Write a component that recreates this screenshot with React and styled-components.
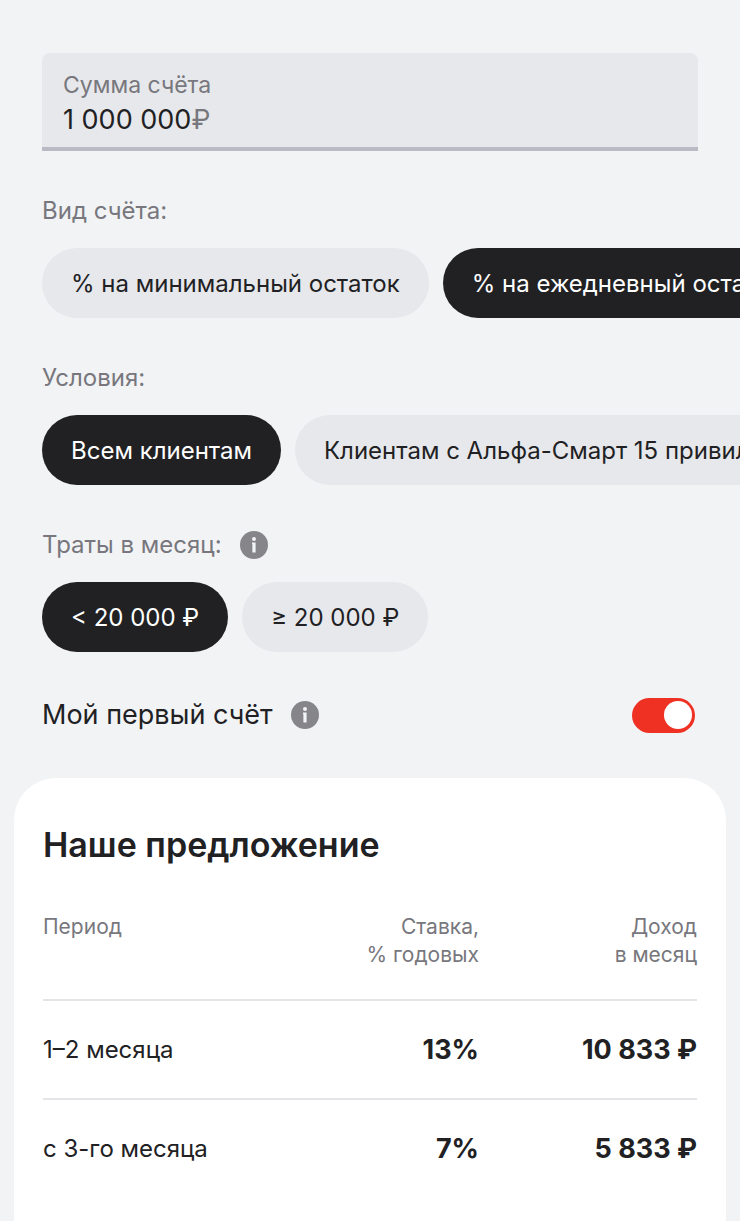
import React from "react";
import styled, { createGlobalStyle } from "styled-components";

const kinds = [
  { id: "min", label: "% на минимальный остаток" },
  { id: "daily", label: "% на ежедневный остаток" },
];

const conditions = [
  { id: "all", label: "Всем клиентам" },
  { id: "smart", label: "Клиентам с Альфа-Смарт 15 привилегий" },
];

const spendings = [
  { id: "less", label: "< 20 000 ₽" },
  { id: "more", label: "≥ 20 000 ₽" },
];

const offers = [
  { period: "1–2 месяца", rate: "13%", income: "10 833 ₽" },
  { period: "с 3-го месяца", rate: "7%", income: "5 833 ₽" },
];

const InfoIcon = () => (
  <svg width="28" height="28" viewBox="0 0 28 28" aria-hidden="true">
    <circle cx="14" cy="14" r="14" fill="#86868a" />
    <circle cx="14" cy="8" r="2" fill="#f2f3f5" />
    <path d="M12 11.5h3.6V21.5h-3.2V13.2H12z" fill="#f2f3f5" />
  </svg>
);

const ChipGroup = ({ label, hint, items, value, onChange }) => (
  <Group role="group" aria-label={label}>
    <GroupTitle>
      {label}
      {hint && (
        <InfoButton type="button" aria-label={hint}>
          <InfoIcon />
        </InfoButton>
      )}
    </GroupTitle>
    <Chips>
      {items.map((item) => (
        <Chip
          key={item.id}
          type="button"
          $active={item.id === value}
          aria-pressed={item.id === value}
          onClick={() => onChange(item.id)}
        >
          {item.label}
        </Chip>
      ))}
    </Chips>
  </Group>
);

const App = () => {
  const [amount, setAmount] = React.useState("1 000 000");
  const [kind, setKind] = React.useState("daily");
  const [condition, setCondition] = React.useState("all");
  const [spending, setSpending] = React.useState("less");
  const [isFirst, setIsFirst] = React.useState(true);

  return (
    <Page>
      <GlobalStyle />
      <Calculator>
        <Field>
          <FieldLabel htmlFor="amount">Сумма счёта</FieldLabel>
          <FieldRow>
            <AmountInput
              id="amount"
              inputMode="numeric"
              value={amount}
              onChange={(e) => setAmount(e.target.value)}
            />
            <Currency>₽</Currency>
          </FieldRow>
        </Field>

        <ChipGroup
          label="Вид счёта:"
          items={kinds}
          value={kind}
          onChange={setKind}
        />
        <ChipGroup
          label="Условия:"
          items={conditions}
          value={condition}
          onChange={setCondition}
        />
        <ChipGroup
          label="Траты в месяц:"
          hint="О тратах в месяц"
          items={spendings}
          value={spending}
          onChange={setSpending}
        />

        <SwitchRow>
          <SwitchLabel htmlFor="first">Мой первый счёт</SwitchLabel>
          <InfoButton type="button" aria-label="О первом счёте">
            <InfoIcon />
          </InfoButton>
          <Switch
            id="first"
            type="checkbox"
            role="switch"
            checked={isFirst}
            onChange={(e) => setIsFirst(e.target.checked)}
          />
        </SwitchRow>
      </Calculator>

      <Offer>
        <OfferTitle>Наше предложение</OfferTitle>
        <Table>
          <thead>
            <tr>
              <HeadCell scope="col">Период</HeadCell>
              <HeadCell scope="col">
                Ставка,
                <br />% годовых
              </HeadCell>
              <HeadCell scope="col">
                Доход
                <br />в месяц
              </HeadCell>
            </tr>
          </thead>
          <tbody>
            {offers.map((offer) => (
              <tr key={offer.period}>
                <Cell>{offer.period}</Cell>
                <Cell $strong>{offer.rate}</Cell>
                <Cell $strong>{offer.income}</Cell>
              </tr>
            ))}
          </tbody>
        </Table>
      </Offer>
    </Page>
  );
};

export default App;

const GlobalStyle = createGlobalStyle`
  *,
  *::before,
  *::after {
    box-sizing: border-box;
  }

  body {
    margin: 0;
    background: #f2f3f5;
    color: #212124;
    font-family: Inter, "Liberation Sans", sans-serif;
  }

  button,
  input {
    font-family: inherit;
    color: inherit;
  }
`;

const Page = styled.main`
  display: flex;
  flex-direction: column;
  min-height: 100vh;
  padding: 53px 14px 0;
  overflow: hidden;
`;

const Calculator = styled.section`
  padding: 0 28px;
`;

const Field = styled.div`
  padding: 16px 21px 8px;
  margin-bottom: 44px;
  background: #e7e8eb;
  border-bottom: 4px solid #b9bac3;
  border-radius: 8px 8px 0 0;
`;

const FieldLabel = styled.label`
  display: block;
  font-size: 23px;
  line-height: 32px;
  color: #77777d;
`;

const FieldRow = styled.div`
  display: flex;
  align-items: center;
  font-size: 27px;
  line-height: 38px;
`;

const AmountInput = styled.input`
  field-sizing: content;
  height: 38px;
  padding: 0;
  border: none;
  outline: none;
  background: none;
  font-size: 27px;
  line-height: 38px;
`;

const Currency = styled.span`
  color: #77777d;
`;

const Group = styled.div`
  margin-bottom: 44px;
`;

const GroupTitle = styled.div`
  display: flex;
  align-items: center;
  gap: 18px;
  height: 32px;
  margin-bottom: 21px;
  font-size: 24px;
  line-height: 32px;
  color: #77777d;
`;

const InfoButton = styled.button`
  display: flex;
  padding: 0;
  border: none;
  background: none;
  cursor: pointer;
`;

const Chips = styled.div`
  display: flex;
  gap: 14px;
  margin-right: -42px;
  overflow-x: auto;
  scrollbar-width: none;
`;

const Chip = styled.button`
  flex-shrink: 0;
  height: 70px;
  padding: 2px 29px 0;
  border: none;
  border-radius: 35px;
  background: ${({ $active }) => ($active ? "#212124" : "#e7e8eb")};
  color: ${({ $active }) => ($active ? "#fff" : "#212124")};
  font-size: 24px;
  line-height: 32px;
  white-space: nowrap;
  cursor: pointer;
`;

const SwitchRow = styled.div`
  display: flex;
  align-items: center;
  gap: 18px;
  height: 38px;
  padding-right: 3px;
`;

const SwitchLabel = styled.label`
  font-size: 27px;
  line-height: 38px;
`;

const Switch = styled.input`
  appearance: none;
  display: flex;
  align-items: center;
  justify-content: flex-end;
  width: 63px;
  height: 35px;
  margin: 0 0 0 auto;
  padding: 0 3px;
  border-radius: 18px;
  background: #ef3124;
  cursor: pointer;

  &::before {
    content: "";
    width: 28px;
    height: 28px;
    border-radius: 50%;
    background: #fff;
  }

  &:not(:checked) {
    justify-content: flex-start;
    background: #b9bac3;
  }
`;

const Offer = styled.section`
  flex: 1;
  margin-top: 44px;
  padding: 45px 29px 0;
  background: #fff;
  border-radius: 42px 42px 0 0;
`;

const OfferTitle = styled.h2`
  margin: 0 0 46px;
  font-size: 34px;
  line-height: 44px;
  font-weight: 600;
`;

const Table = styled.table`
  width: 100%;
  border-collapse: collapse;
  table-layout: fixed;
`;

const HeadCell = styled.th`
  padding: 0 0 30px;
  border-bottom: 2px solid #e4e5e8;
  vertical-align: top;
  text-align: right;
  font-size: 21px;
  line-height: 28px;
  font-weight: 400;
  color: #77777d;

  &:first-child {
    text-align: left;
  }
`;

const Cell = styled.td`
  height: 99px;
  padding: 0;
  text-align: right;
  font-size: ${({ $strong }) => ($strong ? "27px" : "24px")};
  line-height: 36px;
  font-weight: ${({ $strong }) => ($strong ? 700 : 400)};

  &:first-child {
    text-align: left;
  }

  tr:not(:last-child) > & {
    border-bottom: 2px solid #e4e5e8;
  }
`;
